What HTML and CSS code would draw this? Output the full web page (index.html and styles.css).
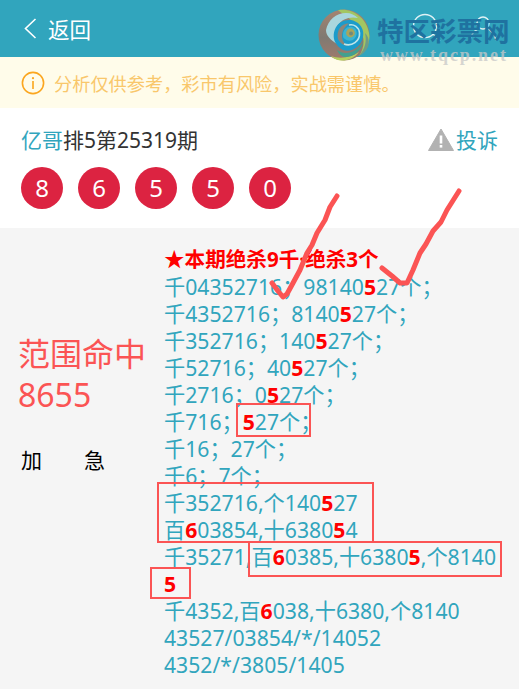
FILE: index.html
```html
<!DOCTYPE html>
<html lang="zh-CN">
<head>
    <meta charset="UTF-8">
    <meta name="viewport" content="width=device-width, initial-scale=1.0">
    <title>返回</title>
    <link rel="stylesheet" href="styles.css">
</head>
<body>
    <header class="topbar">
        <div class="back">
            <svg class="back-icon" width="13" height="21" viewBox="0 0 13 21"><path d="M11.5 1 L1.5 10.5 L11.5 20" fill="none" stroke="#fff" stroke-width="1.6"/></svg>
            <span>返回</span>
        </div>
        <div class="top-icons">
            <svg width="32" height="32" viewBox="0 0 32 32"><circle cx="14" cy="13" r="11.5" fill="none" stroke="#fff" stroke-width="1.4" opacity=".85"/><path d="M22 21 L29 28" stroke="#fff" stroke-width="1.4" opacity=".7"/></svg>
            <svg width="30" height="32" viewBox="0 0 30 32"><circle cx="15" cy="10" r="6" fill="none" stroke="#fff" stroke-width="1.4" opacity=".85"/><path d="M2 27 C4 19 9 16 12 15 M28 27 C26 19 21 16 18 15" fill="none" stroke="#fff" stroke-width="1.4" opacity=".7"/></svg>
        </div>
    </header>

    <div class="notice">
        <svg width="24" height="24" viewBox="0 0 24 24"><circle cx="12" cy="12" r="10.6" fill="none" stroke="#fba61f" stroke-width="1.6"/><circle cx="12" cy="7.2" r="1.1" fill="#fba61f"/><rect x="11.2" y="10" width="1.6" height="8" fill="#fba61f"/></svg>
        <span>分析仅供参考，彩市有风险，实战需谨慎。</span>
    </div>

    <section class="info">
        <div class="info-head">
            <div class="issue"><span class="teal">亿哥</span>排5第25319期</div>
            <div class="report">
                <svg width="26" height="23" viewBox="0 0 26 23"><path d="M13 1 L25.5 22.5 L0.5 22.5 Z" fill="#b2b2b2" stroke="#b2b2b2" stroke-linejoin="round"/><rect x="11.7" y="7.5" width="2.6" height="8" fill="#fff"/><rect x="11.7" y="17" width="2.6" height="2.6" fill="#fff"/></svg>
                <span>投诉</span>
            </div>
        </div>
        <div class="balls">
            <span class="ball">8</span>
            <span class="ball">6</span>
            <span class="ball">5</span>
            <span class="ball">5</span>
            <span class="ball">0</span>
        </div>
    </section>

    <main class="content">
        <div class="side">
            <div class="side-title">范围命中<br>8655</div>
            <div class="side-tag"><span>加</span><span>急</span></div>
        </div>
        <div class="plan">
            <div class="plan-title">★本期绝杀9千·绝杀3个</div>
            <div>千04352716；98140<b>5</b>27个；</div>
            <div>千4352716；8140<b>5</b>27个；</div>
            <div>千352716；140<b>5</b>27个；</div>
            <div>千52716；40<b>5</b>27个；</div>
            <div>千2716；0<b>5</b>27个；</div>
            <div>千716；<b>5</b>27个；</div>
            <div>千16；27个；</div>
            <div>千6；7个；</div>
            <div>千352716,个140<b>5</b>27</div>
            <div>百<b>6</b>03854,十6380<b>5</b>4</div>
            <div>千35271,百<b>6</b>0385,十6380<b>5</b>,个8140<b>5</b></div>
            <div>千4352,百<b>6</b>038,十6380,个8140</div>
            <div>43527/03854/*/14052</div>
            <div>4352/*/3805/1405</div>
        </div>
    </main>

    <!-- watermark pasted over the header -->
    <div class="watermark">
        <svg class="wm-logo" width="52" height="52" viewBox="0 0 52 52">
            <defs>
                <linearGradient id="rim" x1="0" y1="0" x2="0" y2="1">
                    <stop offset="0" stop-color="#a58470"/>
                    <stop offset=".55" stop-color="#7f7a72"/>
                    <stop offset="1" stop-color="#a07a6c"/>
                </linearGradient>
            </defs>
            <circle cx="26" cy="26" r="25.5" fill="url(#rim)"/>
            <!-- green sweep, top to right -->
            <path d="M20 1.2 C34 -1.5 50 9 51.5 27 C51.5 36 47 43 41 47 C47 38 47 27 41 19 C35 11 27 7 20 1.2 Z" fill="#a3c662"/>
            <path d="M41 47 C47 40 49 32 47 24 C51 28 51.5 33 50 38 C48 42 45 45 41 47 Z" fill="#6f9c86"/>
            <!-- pale blue crescent -->
            <path d="M8 21 C10 11 18 4 28 4 C33 4 37 6 40 9 C32 7 24 10 20 16 C16 22 16 29 19 35 C13 31 8 27 8 21 Z" fill="#a9d6dd"/>
            <!-- bottom crescent -->
            <path d="M13 47 C21 50 33 49 41 43 C37 49 30 51.5 24 51.5 C20 51.5 16 50 13 47 Z" fill="#b6cf5e"/>
            <path d="M19 41 C27 47 38 44 45 33 C43 42 36 48 27 48 C24 48 21 45 19 41 Z" fill="#42a08f"/>
            <!-- blue swirl -->
            <path d="M17 33 C13 23 19 11 31 11 C40 11 47 19 45 28 C43 38 33 44 25 41 C21 39 19 36 17 33 Z" fill="#1c9ccb"/>
            <path d="M20 30 C18 21 24 14 31 14.5 C29 16 24 20 24 27 C24 31 26 35 30 37 C26 37 22 34 20 30 Z" fill="#8e8578"/>
            <path d="M26 35 C34 38 42 32 41.5 24 C41 18 36 15 31 16" fill="none" stroke="#bfe6ea" stroke-width="1.6"/>
            <path d="M25 26 C25 20 30 17 34 18 C39 19 40 25 37 29 C34 33 29 32 27 30 C25 29 25 28 25 26 Z" fill="#3db4cf"/>
            <circle cx="32.5" cy="24" r="4.4" fill="#a9a55c"/>
            <circle cx="33" cy="24.5" r="2" fill="#6f8a7c"/>
        </svg>
        <div class="wm-name">特区彩票网</div>
        <div class="wm-url">www.tqcp.net</div>
    </div>

    <!-- red marks drawn on the screenshot -->
    <svg class="marks" width="519" height="689" viewBox="0 0 519 689">
        <g fill="none" stroke="#fb5454">
            <g stroke-width="2">
                <rect x="237" y="404" width="73" height="32"/>
                <rect x="158" y="483" width="215" height="59"/>
                <rect x="249" y="542" width="252" height="34"/>
                <rect x="151" y="568" width="39" height="30"/>
            </g>
            <g stroke-width="5" stroke-linecap="round" stroke-linejoin="round">
                <path d="M337 196 L330 207 L325 220 L317 233 L312 245 L307 253 L300 270 L293 283 L287 294 L283 297 L278 291 L272 283"/>
                <path d="M459 191 L447 210 L441 222 L433 231 L426 244 L420 253 L413 270 L407 283 L400 283 L392 276 L382 268"/>
            </g>
        </g>
    </svg>
</body>
</html>
```

FILE: styles.css
```css
html, body {
    margin: 0;
    padding: 0;
}
body {
    position: relative;
    width: 519px;
    height: 689px;
    overflow: hidden;
    font-family: "Noto Sans", "Noto Sans CJK SC", sans-serif;
    background-color: #f5f5f5;
}
.teal {
    color: #31a5bd;
}
.topbar {
    display: flex;
    justify-content: space-between;
    align-items: center;
    height: 57px;
    padding: 0 21px 0 24px;
    background-color: #31a5bd;
    color: #fff;
}
.back {
    display: flex;
    align-items: center;
    gap: 11px;
    font-size: 21.5px;
}
.top-icons {
    display: flex;
    gap: 25px;
    margin-top: 1px;
}
.notice {
    display: flex;
    align-items: center;
    gap: 9px;
    height: 51px;
    padding-left: 21px;
    background-color: #fffcea;
    color: #f9c76b;
    font-size: 18.2px;
}
.info {
    height: 120px;
    padding: 0 21px;
    background-color: #fff;
}
.info-head {
    display: flex;
    justify-content: space-between;
    align-items: center;
    height: 59px;
    padding-top: 3px;
    box-sizing: border-box;
    font-size: 21px;
    color: #333;
}
.report {
    display: flex;
    align-items: center;
    gap: 2px;
    color: #31a5bd;
}
.balls {
    display: flex;
    gap: 15px;
}
.ball {
    width: 42px;
    height: 42px;
    border-radius: 50%;
    background-color: #dc2341;
    color: #fff;
    font-size: 24px;
    line-height: 42px;
    text-align: center;
}
.content {
    display: flex;
    padding-top: 18px;
}
.side {
    width: 146px;
    padding: 87px 0 0 18px;
    box-sizing: content-box;
}
.side-title {
    font-size: 32px;
    line-height: 41px;
    color: #fb5454;
}
.side-tag {
    display: flex;
    gap: 42px;
    margin: 29px 0 0 3px;
    font-size: 21px;
    color: #000;
}
.plan {
    width: 338px;
    font-size: 21.2px;
    line-height: 27px;
    color: #31a5bd;
    word-break: break-all;
}
.plan b {
    color: #f00;
}
.plan-title {
    color: #f00;
    font-size: 20.6px;
    font-weight: bold;
}
.watermark {
    position: absolute;
    left: 318px;
    top: 9px;
    width: 201px;
    height: 54px;
}
.wm-logo {
    position: absolute;
    left: 0;
    top: 0;
}
.wm-name {
    position: absolute;
    left: 59px;
    top: 9px;
    font-size: 26.5px;
    line-height: 27px;
    font-weight: bold;
    color: #1f72a0;
    white-space: nowrap;
}
.wm-url {
    position: absolute;
    left: 62px;
    top: 36px;
    font-family: "Liberation Serif", serif;
    font-size: 18px;
    line-height: 20px;
    font-weight: bold;
    letter-spacing: 1.9px;
    color: rgba(200, 200, 200, 0.75);
    white-space: nowrap;
}
.marks {
    position: absolute;
    left: 0;
    top: 0;
    pointer-events: none;
}
```
